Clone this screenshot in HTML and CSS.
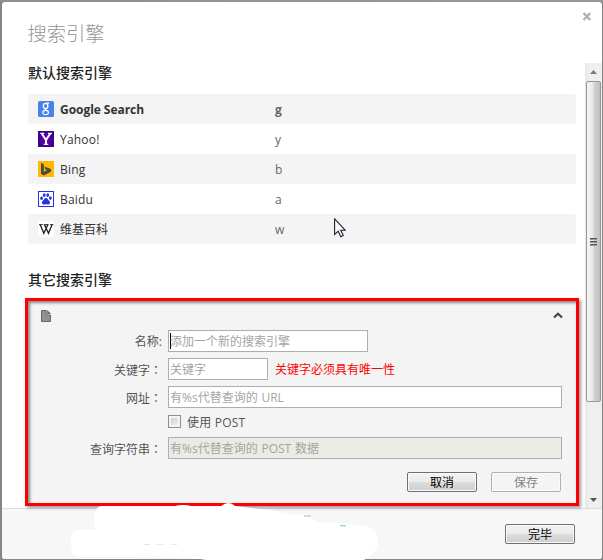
FILE: index.html
```html
<!DOCTYPE html>
<html lang="zh-CN">
<head>
<meta charset="utf-8">
<title>搜索引擎</title>
<link rel="stylesheet" href="styles.css">
</head>
<body>
<div class="dialog">
  <header class="header">
    <h1>搜索引擎</h1>
    <svg class="close" width="10" height="9" viewBox="0 0 10 9"><path d="M1.500 1l6.800 7M8.300 1l-6.800 7" stroke="#b0b0b0" stroke-width="2.400"/></svg>
  </header>
  <main class="body">
    <div class="content">
      <h2>默认搜索引擎</h2>
      <ul class="engines">
        <li class="default"><svg width="16" height="16" viewBox="0 0 16 16"><rect width="16" height="16" rx="1.5" fill="#4683ea"/><g fill="none" stroke="#fff"><ellipse cx="7.6" cy="5" rx="2.2" ry="2.6" stroke-width="1.4"/><path d="M8 2.2h3.2M8.6 7.2c-2.4 1-.8 1.8.4 2.4" stroke-width="1.2"/><ellipse cx="7.6" cy="11.5" rx="2.9" ry="2.1" stroke-width="1.2"/></g></svg><span class="name">Google Search</span><span class="key">g</span></li>
        <li><svg width="16" height="16" viewBox="0 0 16 16"><defs><radialGradient id="y"><stop offset="0" stop-color="#6a00c0"/><stop offset="1" stop-color="#3d0286"/></radialGradient></defs><rect width="16" height="16" fill="url(#y)"/><path d="M3.7 2.5L8 9v4.5M12.3 2.5L8 9" fill="none" stroke="#fff" stroke-width="2"/><path d="M2.3 2.4h4M10 2.4h4M5.7 13.4h4.6" stroke="#fff" stroke-width="1.2"/></svg><span class="name">Yahoo!</span><span class="key">y</span></li>
        <li><svg width="16" height="16" viewBox="0 0 16 16"><rect width="16" height="16" fill="#ffb900"/><path d="M3 2l2.800 1v7.800L9 9.300 7.400 8.500 6.300 5.600 13 8v2.700l-7.200 3.700L3 12.800z" fill="#4c4a48"/></svg><span class="name">Bing</span><span class="key">b</span></li>
        <li><svg width="16" height="16" viewBox="0 0 16 16"><rect x=".5" y=".5" width="15" height="15" fill="#fff" stroke="#2932e1"/><g fill="#2932e1"><ellipse cx="3.6" cy="7.3" rx="1.4" ry="1.8"/><ellipse cx="6.2" cy="4.1" rx="1.4" ry="1.9"/><ellipse cx="9.7" cy="4.1" rx="1.4" ry="1.9"/><ellipse cx="12.4" cy="7.1" rx="1.4" ry="1.8"/><path d="M8 7c1.5 0 2 1.7 3.2 2.8 1.3 1.2 1.2 3.7-1 3.8-.9 0-1.4-.3-2.2-.3s-1.4.3-2.2.3c-2.3-.1-2.3-2.6-1-3.800C6 8.700 6.500 7 8 7z"/></g></svg><span class="name">Baidu</span><span class="key">a</span></li>
        <li><svg width="16" height="16" viewBox="0 0 16 16"><rect width="16" height="16" rx="3" fill="#fff"/><path d="M2.300 3.800l3.500 8.500 4-8.500M6.500 3.800l4 8.500L14 3.800" fill="none" stroke="#222" stroke-width="1.300"/><path d="M1 3.600h3.800M5.700 3.600h5M12 3.600h3.400" stroke="#222" stroke-width=".9"/></svg><span class="name">维基百科</span><span class="key">w</span></li>
      </ul>
      <h2 class="other">其它搜索引擎</h2>
      <section class="editor">
        <div class="editor-head">
          <svg width="10" height="12" viewBox="0 0 10 12"><path d="M.5.5h4.700v4.500h4.300v6.500h-9z" fill="#919191" stroke="#666"/><path d="M6.200 0L10 4H6.200z" fill="#666"/></svg>
          <svg width="10" height="7" viewBox="0 0 10 7"><path d="M1 5.500l4-3.700 4 3.700" fill="none" stroke="#444" stroke-width="2.200"/></svg>
        </div>
        <form class="form">
          <label>名称:</label><div class="field w200 caret">添加一个新的搜索引擎</div>
          <label>关键字<span class="colon" lang="zh-TW">：</span></label><div class="line"><div class="field w100">关键字</div><span class="error">关键字必须具有唯一性</span></div>
          <label>网址<span class="colon" lang="zh-TW">：</span></label><div class="field">有%s代替查询的 URL</div>
          <span></span><div class="line check"><i class="box"></i><span>使用 POST</span></div>
          <label>查询字符串<span class="colon" lang="zh-TW">：</span></label><div class="field off">有%s代替查询的 POST 数据</div>
        </form>
        <div class="actions"><button>取消</button><button disabled>保存</button></div>
      </section>
    </div>
    <div class="scrollbar">
      <svg width="15" height="18" viewBox="0 0 15 18"><path d="M4 11L7.500 7 11 11z" fill="#777"/></svg>
      <div class="thumb"><i></i><i></i><i></i></div>
      <svg width="15" height="18" viewBox="0 0 15 18"><path d="M4 8h7l-3.500 4z" fill="#555"/></svg>
    </div>
  </main>
  <footer class="footer"><button>完毕</button></footer>
</div>
<svg class="smudge" width="603" height="60" viewBox="0 500 603 60"><path d="M101 506H138L175 506Q183 504 191 506H221Q229 500 235 506L270 510 290 514 310 516 317 522 340 523 365 526Q379 529 378 544Q376 554 364 560H206L200 559 140 557H79Q71 556 71 545V538Q72 530 80 530H98Q94 527 94 522V514Q96 507 101 506z" fill="#fff"/><path d="M144 544.500h6M157 544.500h6M171 544.500h6" stroke="#dcecf6"/><path d="M304 516h7" stroke="#cde3c3" stroke-width="2"/><path d="M340 525.700h6" stroke="#9acce6" stroke-width="1.500"/></svg>
<svg class="cursor" width="12" height="20" viewBox="0 0 12 20"><path d="M.6.900v15.600l3.600-3.300 2.600 5.600 2.500-1.200-2.600-5.300h4.600z" fill="#fff" stroke="#202038" stroke-width="1.100"/></svg>
</body>
</html>
```
FILE: styles.css
```css
* { box-sizing: border-box; }
body {
  margin: 0;
  width: 603px;
  height: 560px;
  padding: 2px 1px 1px 2px;
  overflow: hidden;
  position: relative;
  background: #858585 linear-gradient(90deg, #8c9093, #9a9897) no-repeat 0 0 / 100% 2px;
  font: 12px/18px "Open Sans", "Noto Sans CJK SC", sans-serif;
  color: #333;
}
.dialog {
  height: 557px;
  display: flex;
  flex-direction: column;
  background: #fff;
  border-radius: 3px;
  overflow: hidden;
}
.header {
  height: 61px;
  flex: none;
  display: flex;
  justify-content: space-between;
  padding: 17px 10px 0 25.500px;
}
h1 {
  margin: 0;
  font: 300 19.300px/28px "Noto Sans CJK SC", sans-serif;
  color: #949494;
}
.close { margin-top: -7px; }
.body { height: 445px; flex: none; display: flex; justify-content: space-between; }
.content { width: 577px; }
h2 {
  margin: 0 0 0 26px;
  height: 31px;
  font: 500 14px/18px "Noto Sans CJK SC", sans-serif;
  color: #222;
}
.engines { list-style: none; margin: 0 0 0 26px; padding: 0; width: 548px; }
.engines li {
  height: 30px;
  display: grid;
  grid-template-columns: 22px 215px 1fr;
  align-items: center;
  padding-left: 10px;
  border-radius: 2px;
}
.engines li:nth-child(odd) { background: #f4f4f4; }
.engines span { padding-top: 2px; letter-spacing: .2px; }
.engines .key { color: #666; }
.engines .default span { font-weight: 700; letter-spacing: 0; }
.engines .default .name { letter-spacing: -.05px; }
.engines li:last-child .name { letter-spacing: 0; }
.other { margin-top: 26px; height: 28px; }
.editor {
  position: relative;
  z-index: 1;
  margin-left: 23px;
  width: 554px;
  height: 208px;
  border: 3px solid #f00;
  background: #f4f4f4;
  box-shadow: 2px 2px 3px #999, inset 2px 2px 3px #888;
}
.editor-head {
  display: flex;
  justify-content: space-between;
  align-items: center;
  height: 29px;
  padding: 0 13px;
}
.form {
  display: grid;
  grid-template-columns: 134px 394px;
  grid-template-rows: 22px 22px 22px 17px 22px;
  gap: 6px;
}
.form label { text-align: right; line-height: 23px; height: 22px; color: #555; white-space: nowrap; }
.colon { font-family: "Noto Sans CJK TC", sans-serif; }
.field {
  height: 22px;
  border: 1px solid #abadb3;
  background: #fff;
  color: #a4a4a4;
  line-height: 21px;
  padding-left: 1px;
  white-space: nowrap;
  word-spacing: .7px;
}
.w200 { width: 200px; }
.w100 { width: 100px; }
.caret { background: linear-gradient(#000, #000) 1px 2px / 1px 16px no-repeat #fff; }
.off { background: #ebebe4; }
.line { display: flex; gap: 7px; }
.error { color: #f00; line-height: 23px; }
.check { height: 17px; gap: 6px; color: #555; padding-top: 1px; }
.check span { line-height: 16px; letter-spacing: .2px; }
.box {
  width: 13px;
  height: 13px;
  border: 1px solid #8e8f8f;
  background: linear-gradient(135deg, #c5c9cd, #f6f6f6);
  box-shadow: inset 0 0 0 2px #f4f4f4;
}
.actions { display: flex; justify-content: flex-end; gap: 14px; padding: 13px 15px 0 0; }
button {
  width: 70px;
  height: 20px;
  padding: 0;
  border: 1px solid #707070;
  border-radius: 2px;
  background: linear-gradient(#f2f2f2, #ebebeb 50%, #ddd 50%, #cfcfcf);
  box-shadow: inset 0 0 0 1px #fafafa;
  font: 12px/18px "Noto Sans CJK SC", sans-serif;
  color: #000;
}
button:disabled { border-color: #adb2b5; background: #f4f4f4; color: #838383; }
.scrollbar {
  width: 17px;
  padding: 0 1px;
  display: flex;
  flex-direction: column;
  background: linear-gradient(90deg, #e8e8e8, #f0f0f0 30%, #eee);
}
.scrollbar > svg { flex: none; }
.thumb {
  height: 321px;
  margin-bottom: 88px;
  border: 1px solid #979797;
  border-radius: 2px;
  background: linear-gradient(90deg, #f5f5f5, #e8e8eb 45%, #d1d1d5 55%, #bfc0c4);
  display: flex;
  flex-direction: column;
  align-items: center;
  justify-content: center;
  gap: 1px;
}
.thumb i { width: 7px; height: 2px; background: #555; border-bottom: 1px solid #999; }
.footer {
  height: 51px;
  flex: none;
  border-top: 1px solid #ddd;
  background: #f7f7f7;
  display: flex;
  justify-content: flex-end;
  padding: 15px 27px 0 0;
}
.smudge { position: absolute; left: 0; top: 500px; z-index: 2; }
.cursor { position: absolute; left: 334px; top: 218px; }
```
